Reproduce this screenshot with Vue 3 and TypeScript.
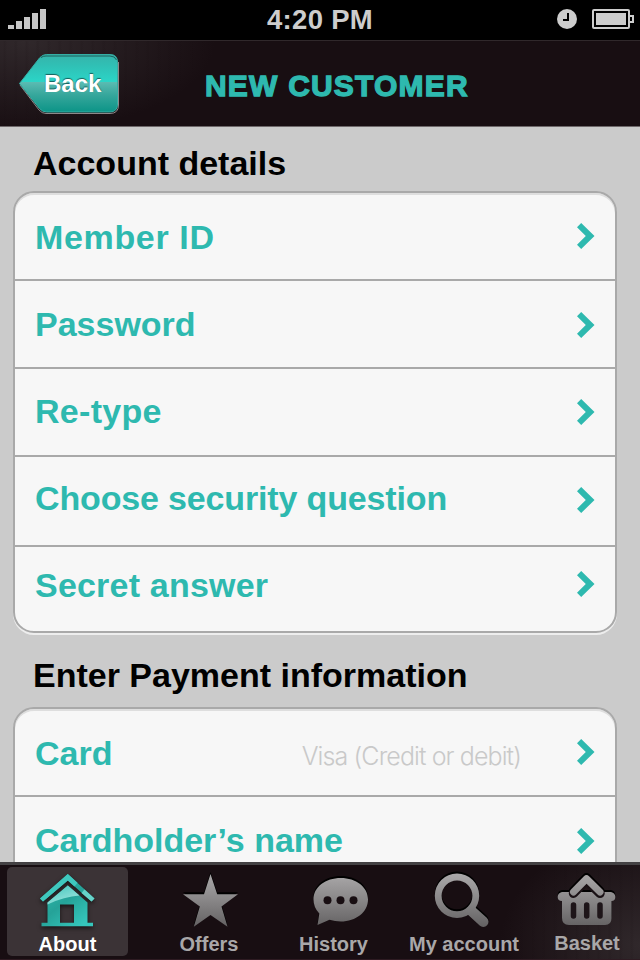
<script setup lang="ts">
interface Row { label: string; hint?: string }
interface Section { id: string; title: string; rows: Row[] }
interface Tab { id: string; label: string; viewBox: string; active?: boolean }

const sections: Section[] = [
  {
    id: 'account',
    title: 'Account details',
    rows: [
      { label: 'Member ID' },
      { label: 'Password' },
      { label: 'Re-type' },
      { label: 'Choose security question' },
      { label: 'Secret answer' },
    ],
  },
  {
    id: 'payment',
    title: 'Enter Payment information',
    rows: [
      { label: 'Card', hint: 'Visa (Credit or debit)' },
      { label: 'Cardholder’s name' },
    ],
  },
]

const tabs: Tab[] = [
  { id: 'about', label: 'About', viewBox: '27.5 867 80 64', active: true },
  { id: 'offers', label: 'Offers', viewBox: '169 867 80 64' },
  { id: 'history', label: 'History', viewBox: '293.5 867 80 64' },
  { id: 'profile', label: 'My account', viewBox: '424 867 80 64' },
  { id: 'basket', label: 'Basket', viewBox: '547 867 80 64' },
]
</script>

<template>
  <div class="screen">
    <div class="status">
      <svg class="signal" width="40" height="22" viewBox="0 0 40 22" fill="#c6c6c6">
        <rect x="0" y="17" width="6" height="4" />
        <rect x="8" y="13" width="6" height="8" />
        <rect x="16" y="9" width="6" height="12" />
        <rect x="24" y="5" width="6" height="16" />
        <rect x="32" y="1" width="6" height="20" />
      </svg>
      <span class="time">4:20 PM</span>
      <div class="indicators">
        <svg width="20" height="20" viewBox="0 0 20 20">
          <circle cx="10" cy="10" r="10" fill="#cdcdcd" />
          <path d="M11 4v7H6" fill="none" stroke="#000" stroke-width="2" />
        </svg>
        <svg width="42" height="20" viewBox="0 0 42 20">
          <rect x="1" y="1" width="36" height="18" rx="1" fill="none" stroke="#cdcdcd" stroke-width="2" />
          <rect x="4" y="4" width="30" height="12" fill="#cdcdcd" />
          <path d="M38 7h3v6h-3" fill="none" stroke="#cdcdcd" stroke-width="2" />
        </svg>
      </div>
    </div>

    <header class="navbar">
      <button class="back" type="button">
        <svg class="back-shape" width="102" height="62" viewBox="18 53 102 62">
          <defs>
            <linearGradient id="backFill" gradientUnits="userSpaceOnUse" x1="0" y1="54" x2="0" y2="112">
              <stop offset="0" stop-color="#36b3aa" />
              <stop offset="0.2" stop-color="#30c0b5" />
              <stop offset="0.48" stop-color="#2bd5c7" />
              <stop offset="0.485" stop-color="#5bbbb2" />
              <stop offset="0.7" stop-color="#37a79c" />
              <stop offset="1" stop-color="#0c9487" />
            </linearGradient>
          </defs>
          <path d="M20 85L39 110Q42 113.500 46 113.500H110Q118.500 113.500 118.500 105V62" fill="none" stroke="#8e8789" stroke-width="1" />
          <path d="M19.500 83.500L39.500 58Q42.500 54.500 46.500 54.500H110Q117.500 54.500 117.500 62.500V104Q117.500 112 110 112H46.500Q42.500 112 39.500 108.500Z" fill="url(#backFill)" stroke="#35aea4" />
          <path d="M41 57.500Q43 56 46 56H110Q115 56 116.500 60" fill="none" stroke="#1c5f5b" stroke-width="1" />
        </svg>
        <span class="back-label">Back</span>
      </button>
      <h1 class="title">NEW CUSTOMER</h1>
    </header>

    <main class="content">
      <section v-for="section in sections" :key="section.id" :class="['section', section.id]">
        <h2 class="heading">{{ section.title }}</h2>
        <ul class="card">
          <li v-for="row in section.rows" :key="row.label" class="row">
            <span class="label">{{ row.label }}</span>
            <span v-if="row.hint" class="hint">{{ row.hint }}</span>
            <svg class="chevron" width="18" height="26" viewBox="0 0 18 26">
              <path d="M4.200 0L17.500 13L4.200 26L0 21.800L8.800 13L0 4.200Z" fill="#2eb9af" />
            </svg>
          </li>
        </ul>
      </section>
    </main>

    <nav class="tabbar">
      <a v-for="tab in tabs" :key="tab.id" :class="['tab', tab.id, { active: tab.active }]">
        <svg class="icon" width="80" height="64" :viewBox="tab.viewBox">
          <defs>
            <linearGradient :id="'grey-' + tab.id" gradientUnits="userSpaceOnUse" x1="0" y1="874" x2="0" y2="928">
              <stop offset="0" stop-color="#aaa8a9" />
              <stop offset="0.45" stop-color="#8b898a" />
              <stop offset="1" stop-color="#626061" />
            </linearGradient>
            <linearGradient id="teal" gradientUnits="userSpaceOnUse" x1="50" y1="876" x2="86" y2="922">
              <stop offset="0" stop-color="#2cbeb1" />
              <stop offset="0.5" stop-color="#25a298" />
              <stop offset="1" stop-color="#35c7bc" />
            </linearGradient>
            <linearGradient id="gloss" gradientUnits="userSpaceOnUse" x1="57" y1="884" x2="63" y2="902">
              <stop offset="0" stop-color="#45c8be" />
              <stop offset="1" stop-color="#8fdfd8" />
            </linearGradient>
          </defs>
          <template v-if="tab.id === 'about'">
            <g fill="url(#teal)">
              <path d="M39.500 898.500L67.300 874L94 898.500L91 901.500L67.300 880.500L42.500 901.500Z" />
              <path d="M47 902.500L67.300 885.500L87 902.500V922.800H92.500V926.300H41V922.800H47ZM59.500 904.500V922.800H73.500V904.500Z" fill-rule="evenodd" />
            </g>
            <path d="M47 902.500L67.300 885.500L79 895.600Q64 896.500 47 904.500Z" fill="url(#gloss)" />
            <path d="M39.500 898.500L67.300 874L77 882.800L74 886.500L67.300 880.500L42.500 901.500Z" fill="#3fc8be" />
            <path d="M81 893L84 889.500L94 898.500L91 901.500Z" fill="#67d3ca" />
          </template>
          <path v-else-if="tab.id === 'offers'" d="M210.500 874L217.200 894.200H238L221.500 906.500L227.500 926.800L210.500 915L193.800 926.800L199.800 906.500L183 894.200H204Z" fill="url(#grey-offers)" />
          <template v-else-if="tab.id === 'history'">
            <path d="M340.300 878C355.500 878 367.500 887 367.500 899.500S355.500 921.500 340.300 921.500Q334.500 921.500 329 919.800L317 925L318.800 913.500Q313 907.500 313 899.500C313 887 325 878 340.300 878Z" fill="url(#grey-history)" />
            <g fill="#180e12"><circle cx="327" cy="900.300" r="4" /><circle cx="340" cy="900.300" r="4" /><circle cx="353" cy="900.300" r="4" /></g>
          </template>
          <g v-else-if="tab.id === 'profile'" fill="none" stroke="url(#grey-profile)">
            <circle cx="457" cy="895.800" r="18.800" stroke-width="6.800" />
            <path d="M471.500 911L483.200 921.700" stroke-width="10.500" stroke-linecap="round" />
          </g>
          <template v-else>
            <path d="M562 892H611Q615.300 893 615.300 897T611.500 901V918Q611.500 925 605 925H569Q562 925 562 918V901Q557.700 901 557.700 897T562 892Z" fill="url(#grey-basket)" />
            <path d="M573.500 905V916M586.700 905V916M600 905V916" stroke="#1e1519" stroke-width="5.500" stroke-linecap="round" />
            <path d="M573.500 893.300L586.500 880L600 893.300" fill="none" stroke="#1a1115" stroke-width="9.500" stroke-linecap="round" stroke-linejoin="round" />
            <path d="M573.500 892L586.500 878.800L600 892" fill="none" stroke="url(#grey-basket)" stroke-width="7" stroke-linecap="round" stroke-linejoin="round" />
          </template>
        </svg>
        <span class="tab-label">{{ tab.label }}</span>
      </a>
    </nav>
  </div>
</template>

<style>
body { margin: 0; background: #cbcbcb; }
</style>

<style scoped>
.screen {
  width: 640px;
  height: 960px;
  overflow: hidden;
  display: flex;
  flex-direction: column;
  background: #cbcbcb;
  font-family: "Liberation Sans", Arial, sans-serif;
  font-weight: 700;
}
.status {
  box-sizing: border-box;
  flex: none;
  height: 40px;
  display: grid;
  grid-template-columns: 1fr auto 1fr;
  padding: 8px 6px 0 6px;
  background: #000;
  color: #cdcdcd;
}
.signal { margin-left: 2px; }
.time {
  font-size: 27.500px;
  line-height: 23px;
  letter-spacing: 0.300px;
}
.indicators {
  display: flex;
  justify-content: flex-end;
  gap: 15px;
  padding-top: 1px;
}
.navbar {
  box-sizing: border-box;
  flex: none;
  height: 87px;
  display: flex;
  align-items: flex-start;
  padding: 12px 0 0 18px;
  border-top: 1px solid #30282b;
  border-bottom: 1px solid #6e686a;
  background:
    repeating-linear-gradient(90deg, #180e1200 0 3px, #180e121c 4px 5px, #180e1200 7px 11px),
    radial-gradient(ellipse 190px 90px at 25px 0, #30282b, #180e12);
}
.back {
  position: relative;
  width: 102px;
  height: 62px;
  padding: 0;
  border: 0;
  background: none;
  color: #fff;
  font: inherit;
  text-align: left;
}
.back-shape { position: absolute; left: 0; top: 0; }
.back-label {
  position: relative;
  display: block;
  padding-left: 26px;
  font-size: 24px;
  line-height: 60px;
  text-shadow: 0 -1px 1px #175e59;
}
.title {
  margin: 16px 0 0 85px;
  color: #2eb9af;
  font-size: 30px;
  line-height: 34px;
  letter-spacing: 1.200px;
  -webkit-text-stroke: 1.300px #2eb9af;
}
.content { flex: 1; min-height: 0; overflow: hidden; }
.section { height: 516px; }
.heading {
  margin: 0;
  padding: 17px 0 0 33px;
  height: 47px;
  color: #000;
  font-size: 34px;
  line-height: 39px;
}
.payment .heading { padding-top: 13px; height: 51px; }
.section .card {
  box-sizing: border-box;
  width: 604px;
  margin: 0 0 0 13px;
  padding: 0;
  list-style: none;
  border: 2px solid #a9a9a9;
  border-radius: 21px;
  background: #f7f7f7;
  box-shadow: inset 0 2px 0 #dedede, 0 2px 0 #ededed;
}
.row {
  box-sizing: border-box;
  display: flex;
  align-items: flex-start;
  height: 88px;
  padding: 0 20px 0 20px;
  border-bottom: 2px solid #a9a9a9;
}
.row:nth-child(4) { height: 90px; }
.row:nth-child(5) { height: 84px; border-bottom: 0; }
.label {
  margin-top: 25px;
  color: #2eb9af;
  font-size: 34px;
  line-height: 39px;
}
.row:nth-child(2) .label { margin-top: 24px; }
.row:nth-child(3) .label { margin-top: 23px; letter-spacing: 0.300px; }
.row:nth-child(4) .label { margin-top: 22px; letter-spacing: -0.150px; }
.row:nth-child(5) .label { margin-top: 19px; letter-spacing: 0.200px; }
.account .row:nth-child(1) .label { letter-spacing: 0.650px; }
.hint {
  margin: 32px 56px 0 auto;
  color: #c9c9c9;
  font-family: Inter, "Liberation Sans", sans-serif;
  font-size: 25px;
  font-weight: 300;
  line-height: 30px;
  letter-spacing: -0.900px;
}
.chevron { flex: none; margin: 30px 0 0 auto; }
.row:nth-child(2) .chevron { margin-top: 31px; }
.row:nth-child(5) .chevron { margin-top: 24px; }
.hint + .chevron { margin-left: 0; }
.tabbar {
  box-sizing: border-box;
  flex: none;
  height: 98px;
  display: grid;
  grid-template-columns: 121px 162px 87px 174px 72px;
  padding: 2px 0 5px 7px;
  border-top: 3px solid #434143;
  border-bottom: 1px solid #2e1b22;
  background:
    repeating-linear-gradient(90deg, #180e1200 0 3px, #180e121c 4px 5px, #180e1200 7px 11px),
    radial-gradient(ellipse 140px 110px at 640px 80px, #30282b, #180e12);
}
.tab {
  display: flex;
  flex-direction: column;
  align-items: center;
  color: #a9a7a8;
  font-size: 20px;
  line-height: 23px;
}
.active { color: #fff; border-radius: 5px; background: #3b3336; }
.icon { flex: none; filter: drop-shadow(0 -1.500px 0.500px #000); }
.about .icon { filter: drop-shadow(0 2px 2px #0009); }
.tab-label { margin-top: 2px; white-space: nowrap; }
.basket .tab-label { margin-top: 1px; }
</style>
